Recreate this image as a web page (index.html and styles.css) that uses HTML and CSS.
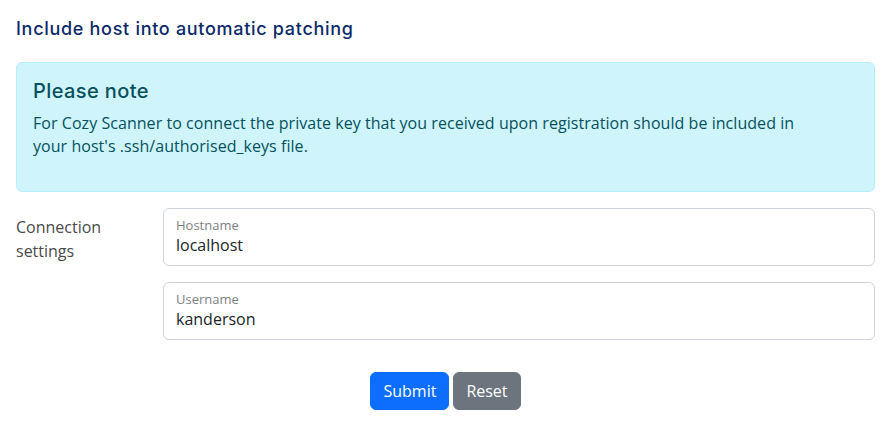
FILE: index.html
```html
<!DOCTYPE html>
<html lang="en">
<head>
<meta charset="utf-8">
<title>Include host into automatic patching</title>
<link rel="stylesheet" href="styles.css">
</head>
<body>
<main class="page">
  <h1 class="page-title">Include host into automatic patching</h1>
  <div class="alert">
    <h2 class="alert-heading">Please note</h2>
    <p class="alert-text">For Cozy Scanner to connect the private key that you received upon registration should be included in your host's .ssh/authorised_keys file.</p>
  </div>
  <form class="form">
    <div class="form-row">
      <div class="row-label">Connection settings</div>
      <div class="fields">
        <div class="floating">
          <label class="floating-label" for="host">Hostname</label>
          <input class="floating-input" id="host" type="text" value="localhost">
        </div>
        <div class="floating">
          <label class="floating-label" for="user">Username</label>
          <input class="floating-input" id="user" type="text" value="kanderson">
        </div>
      </div>
    </div>
    <div class="actions">
      <button type="submit" class="btn btn-primary">Submit</button>
      <button type="reset" class="btn btn-secondary">Reset</button>
    </div>
  </form>
</main>
</body>
</html>
```
FILE: styles.css
```css
* { box-sizing: border-box; }
html, body { margin: 0; padding: 0; background: #fff; }
body {
  font-family: "Open Sans", "Noto Sans", sans-serif;
  font-size: 16px;
  color: #212529;
}
.page {
  padding: 16px 9px 0 16px;
}
.page-title {
  margin: 0 0 20px 0;
  font-family: Inter, "Noto Sans", sans-serif;
  font-weight: 500;
  font-size: 18px;
  line-height: 26px;
  color: #0b2a6a;
  letter-spacing: 0.7px;
}
.alert {
  background: #cff4fc;
  border: 1px solid #b6effb;
  border-radius: 6px;
  padding: 16px 16px 0 16px;
  color: #055160;
  height: 130px;
}
.alert-heading {
  margin: 0 0 9px 0;
  font-family: Inter, "Noto Sans", sans-serif;
  font-weight: 500;
  font-size: 20px;
  line-height: 24px;
  letter-spacing: 0.4px;
  color: #08505e;
}
.alert-text {
  margin: 0;
  font-size: 16px;
  line-height: 23px;
  letter-spacing: 0.05px;
  max-width: 770px;
}
.form {
  margin-top: 16px;
}
.form-row {
  display: flex;
}
.row-label {
  width: 147px;
  flex: none;
  padding-top: 7px;
  padding-right: 40px;
  font-size: 16px;
  line-height: 24px;
  color: #4a4a4a;
}
.fields {
  flex: 1;
  display: flex;
  flex-direction: column;
  gap: 16px;
}
.floating {
  position: relative;
}
.floating-label {
  position: absolute;
  left: 13px;
  top: 9px;
  font-size: 13px;
  line-height: 16px;
  color: #7d7f82;
}
.floating-input {
  display: block;
  width: 100%;
  height: 58px;
  padding: 23px 12px 7px 12px;
  border: 1px solid #ced4da;
  border-radius: 6px;
  font-family: "Open Sans", "Noto Sans", sans-serif;
  font-size: 16px;
  line-height: 24px;
  color: #212529;
  background: #fff;
}
.actions {
  display: flex;
  justify-content: center;
  gap: 4px;
  margin-top: 32px;
}
.btn {
  height: 38px;
  padding: 0 12px;
  border: 1px solid transparent;
  border-radius: 6px;
  font-family: "Open Sans", "Noto Sans", sans-serif;
  font-size: 16px;
  line-height: 24px;
  color: #fff;
  cursor: pointer;
}
.btn-primary { background: #0d6efd; border-color: #0d6efd; }
.btn-secondary { background: #6c757d; border-color: #6c757d; }
```
